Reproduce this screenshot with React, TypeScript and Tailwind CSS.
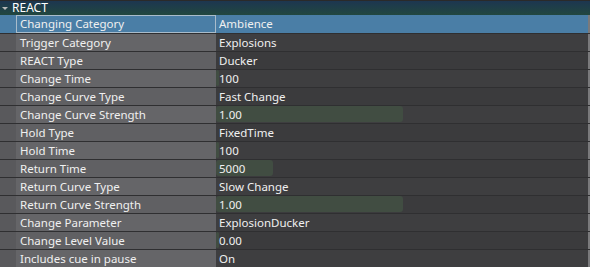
type Row = {
  label: string
  value: string
  fill?: number
}

const rows: Row[] = [
  { label: "Changing Category", value: "Ambience" },
  { label: "Trigger Category", value: "Explosions" },
  { label: "REACT Type", value: "Ducker" },
  { label: "Change Time", value: "100", fill: 3 },
  { label: "Change Curve Type", value: "Fast Change" },
  { label: "Change Curve Strength", value: "1.00", fill: 187 },
  { label: "Hold Type", value: "FixedTime" },
  { label: "Hold Time", value: "100", fill: 3 },
  { label: "Return Time", value: "5000", fill: 57 },
  { label: "Return Curve Type", value: "Slow Change" },
  { label: "Return Curve Strength", value: "1.00", fill: 187 },
  { label: "Change Parameter", value: "ExplosionDucker" },
  { label: "Change Level Value", value: "0.00", fill: 3 },
  { label: "Includes cue in pause", value: "On" },
]

function PropRow({ row, selected, odd }: { row: Row; selected: boolean; odd: boolean }) {
  if (selected) {
    return (
      <div className="flex h-[18px] bg-[#4a7ea6]">
        <div className="w-4 shrink-0" />
        <div className="w-[200px] shrink-0 border border-[#a9bccb] pl-[3px] leading-[16px]">{row.label}</div>
        <div className="flex-1 pl-[3px] leading-[18px]">{row.value}</div>
        <div className="w-[2px] shrink-0 bg-[#7a7a7c]" />
      </div>
    )
  }
  return (
    <div className="flex h-[18px] border-t border-[#2f2f31]">
      <div className="w-4 shrink-0 bg-[#59595c]" />
      <div className={`w-[200px] shrink-0 pl-1 leading-[17px] ${odd ? "bg-[#656568]" : "bg-[#606063]"}`}>
        {row.label}
      </div>
      <div className={`relative flex-1 leading-[17px] ${odd ? "bg-[#3e3e40]" : "bg-[#3b3b3d]"}`}>
        {row.fill && (
          <div
            className="absolute left-0 top-0 bottom-px rounded-[3px] bg-[#414d42]"
            style={{ width: row.fill }}
          />
        )}
        <span className="relative pl-[3px]">{row.value}</span>
      </div>
      <div className="w-[2px] shrink-0 bg-[#7a7a7c]" />
    </div>
  )
}

export default function App() {
  return (
    <div className="w-[590px] h-[267px] overflow-hidden bg-[#3b3b3d] text-[11.5px] text-[#f0f0f0] font-['Noto_Sans',sans-serif]">
      {/* header */}
      <div className="flex items-center h-[15px] border-t border-[#2a2a2a] bg-gradient-to-b from-[#1d3650] to-[#22473f] pr-[2px]">
        <svg width="12" height="14" viewBox="0 0 12 14" className="shrink-0">
          <path d="M2 6 L8 6 L5 9 Z" fill="#b9b9b9" />
        </svg>
        <span className="leading-[14px] text-[12px] text-white">REACT</span>
      </div>
      {rows.map((r, i) => (
        <PropRow key={r.label} row={r} selected={i === 0} odd={i % 2 === 1} />
      ))}
    </div>
  )
}
